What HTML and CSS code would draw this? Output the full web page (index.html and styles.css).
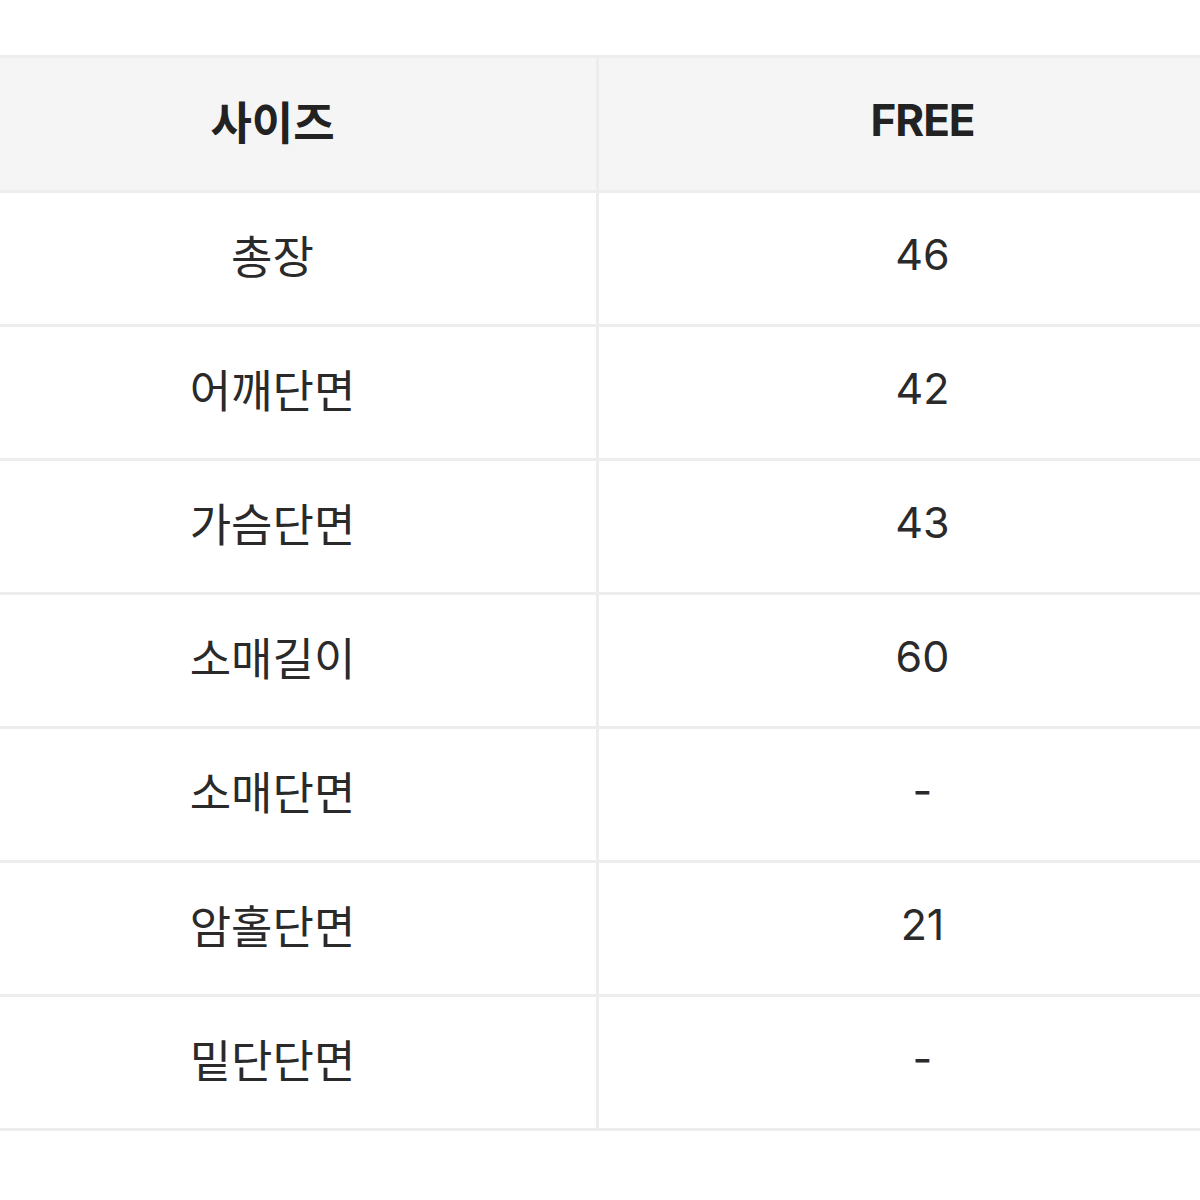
FILE: index.html
```html
<!DOCTYPE html>
<html lang="ko">
<head>
<meta charset="utf-8">
<link rel="stylesheet" href="styles.css">
</head>
<body>
<div class="page">
  <table class="size-table">
    <thead>
      <tr><th>사이즈</th><th class="num">FREE</th></tr>
    </thead>
    <tbody>
      <tr><td>총장</td><td class="num">46</td></tr>
      <tr><td>어깨단면</td><td class="num">42</td></tr>
      <tr><td>가슴단면</td><td class="num">43</td></tr>
      <tr><td>소매길이</td><td class="num">60</td></tr>
      <tr><td>소매단면</td><td class="num">-</td></tr>
      <tr><td>암홀단면</td><td class="num">21</td></tr>
      <tr><td>밑단단면</td><td class="num">-</td></tr>
    </tbody>
  </table>
</div>
</body>
</html>
```

FILE: styles.css
```css
html, body {
  margin: 0;
  padding: 0;
  background: #ffffff;
  overflow: hidden;
}
.page {
  width: 1200px;
  height: 1200px;
  overflow: hidden;
  padding-top: 55px;
  box-sizing: border-box;
}
.size-table {
  margin-left: -54px;
  width: 1303px;
  border-collapse: collapse;
  table-layout: fixed;
  font-family: "Noto Sans CJK KR", "Noto Sans", sans-serif;
}
.size-table th,
.size-table td {
  border: 3px solid #ededed;
  height: 123px;
  padding: 0 0 8px;
  text-align: center;
  vertical-align: middle;
  font-size: 45px;
  line-height: 1;
}
.size-table th {
  height: 124px;
  background: #f5f5f5;
  color: #222222;
  font-weight: 700;
}
.size-table td {
  color: #2a2a2a;
  font-weight: 400;
}
.size-table .num {
  font-family: Inter, "Noto Sans CJK KR", sans-serif;
  font-size: 43px;
}
.size-table th.num {
  font-size: 44px;
  letter-spacing: -1px;
}
```
